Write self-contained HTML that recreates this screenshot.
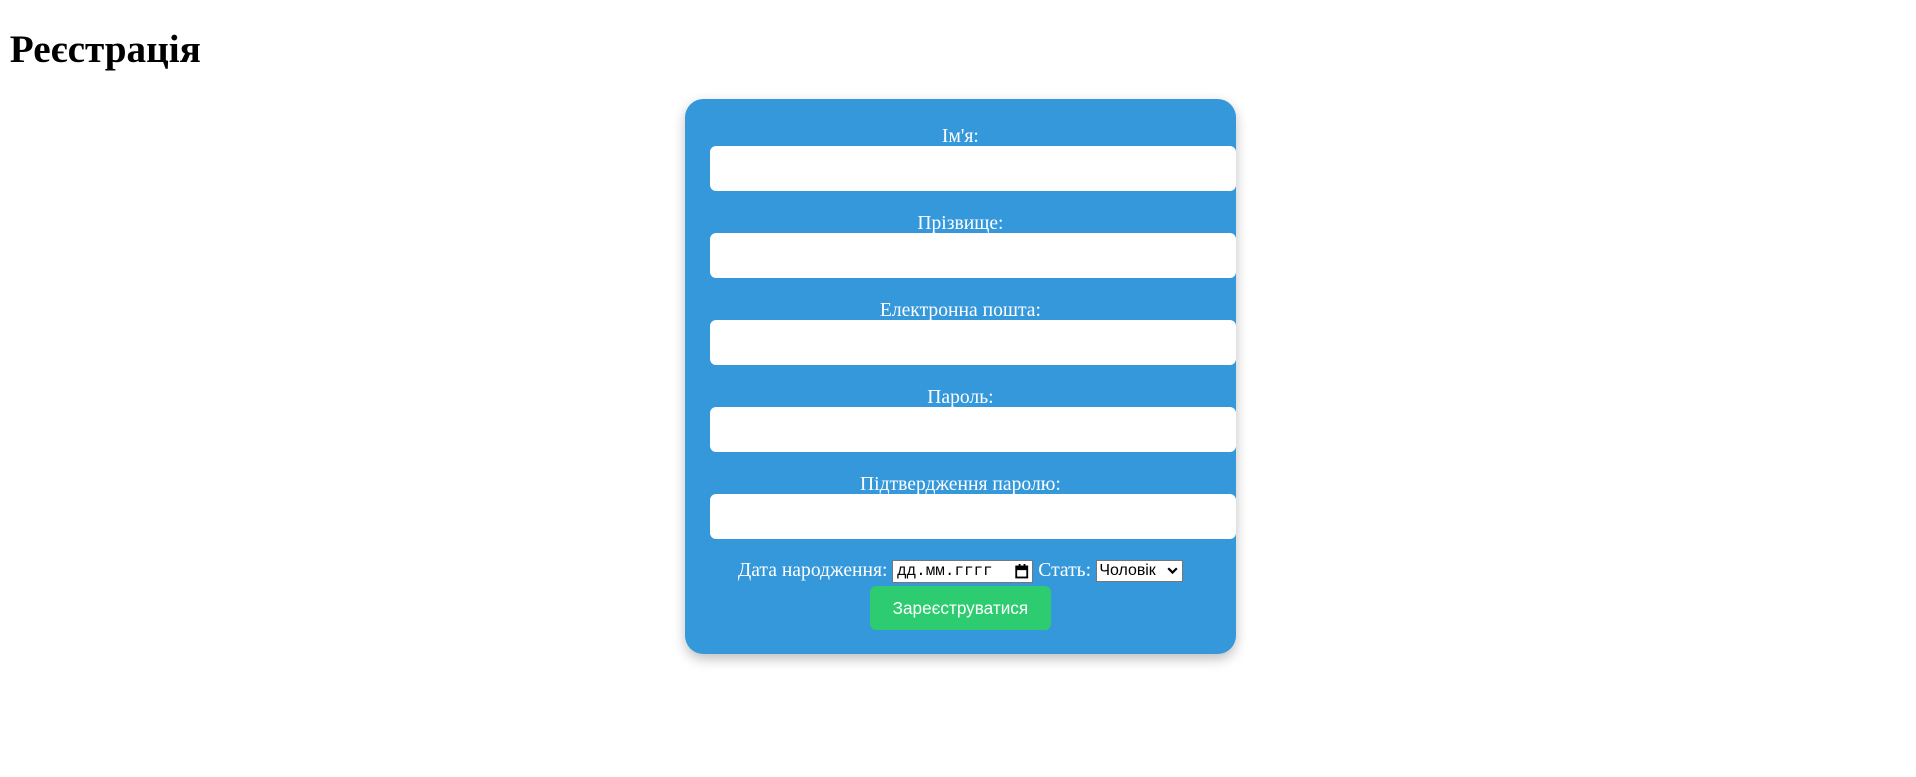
<!DOCTYPE html>
<html><head><meta charset="utf-8">
<style>
html{zoom:1.2258;}
body{margin:8px;font-family:"Liberation Serif","Noto Serif CJK SC",serif;background:#fff;}
h1{font-size:32px;margin:22px 0 21px;}
.card{position:absolute;left:559px;top:81px;width:409px;padding:20px;background:#3498db;border-radius:15px;box-shadow:0 4px 10px rgba(0,0,0,0.25);color:#fff;text-align:center;}
label.b{display:block;font-size:16px;line-height:18px;position:relative;top:2px;}
.inp{display:block;width:429px;height:37px;box-sizing:border-box;background:#fff;border-radius:5px;margin-bottom:16px;}
.row{font-size:16px;line-height:20px;height:21px;white-space:nowrap;}
.date{display:inline-block;vertical-align:middle;width:115px;height:19px;box-sizing:border-box;background:#fff;border:1px solid #767676;color:#000;font-family:"Liberation Mono",monospace;font-size:13px;line-height:17px;text-align:left;padding-left:3px;position:relative;}
.sel{display:inline-block;vertical-align:middle;width:71px;height:18px;box-sizing:border-box;background:#fff;border:1px solid #767676;color:#000;font-family:"Liberation Sans",sans-serif;font-size:13px;line-height:16px;text-align:left;padding-left:2px;position:relative;}
.btn{display:block;margin:1px auto 0;width:148px;height:36px;background:#2ecc71;border-radius:5px;color:#fff;font-family:"Liberation Sans",sans-serif;font-size:14px;line-height:36px;}
</style></head><body>
<h1>Реєстрація</h1>
<div class="card">
<label class="b">Ім'я:</label><div class="inp"></div>
<label class="b">Прізвище:</label><div class="inp"></div>
<label class="b">Електронна пошта:</label><div class="inp"></div>
<label class="b">Пароль:</label><div class="inp"></div>
<label class="b">Підтвердження паролю:</label><div class="inp"></div>
<div class="row">Дата народження: <span class="date">дд.мм.гггг<svg style="position:absolute;right:3px;top:3px" width="11" height="12" viewBox="0 0 11 12"><rect x="1" y="2" width="9" height="9" fill="none" stroke="#000" stroke-width="1.5"/><rect x="1" y="2" width="9" height="3" fill="#000"/><rect x="3" y="0" width="1.5" height="3" fill="#000"/><rect x="7" y="0" width="1.5" height="3" fill="#000"/></svg></span> Стать: <span class="sel">Чоловік<svg style="position:absolute;right:3px;top:5px" width="9" height="6" viewBox="0 0 9 6"><path d="M1 1L4.5 4.5L8 1" fill="none" stroke="#000" stroke-width="1.8"/></svg></span></div>
<div class="btn">Зареєструватися</div>
</div>
</body></html>
